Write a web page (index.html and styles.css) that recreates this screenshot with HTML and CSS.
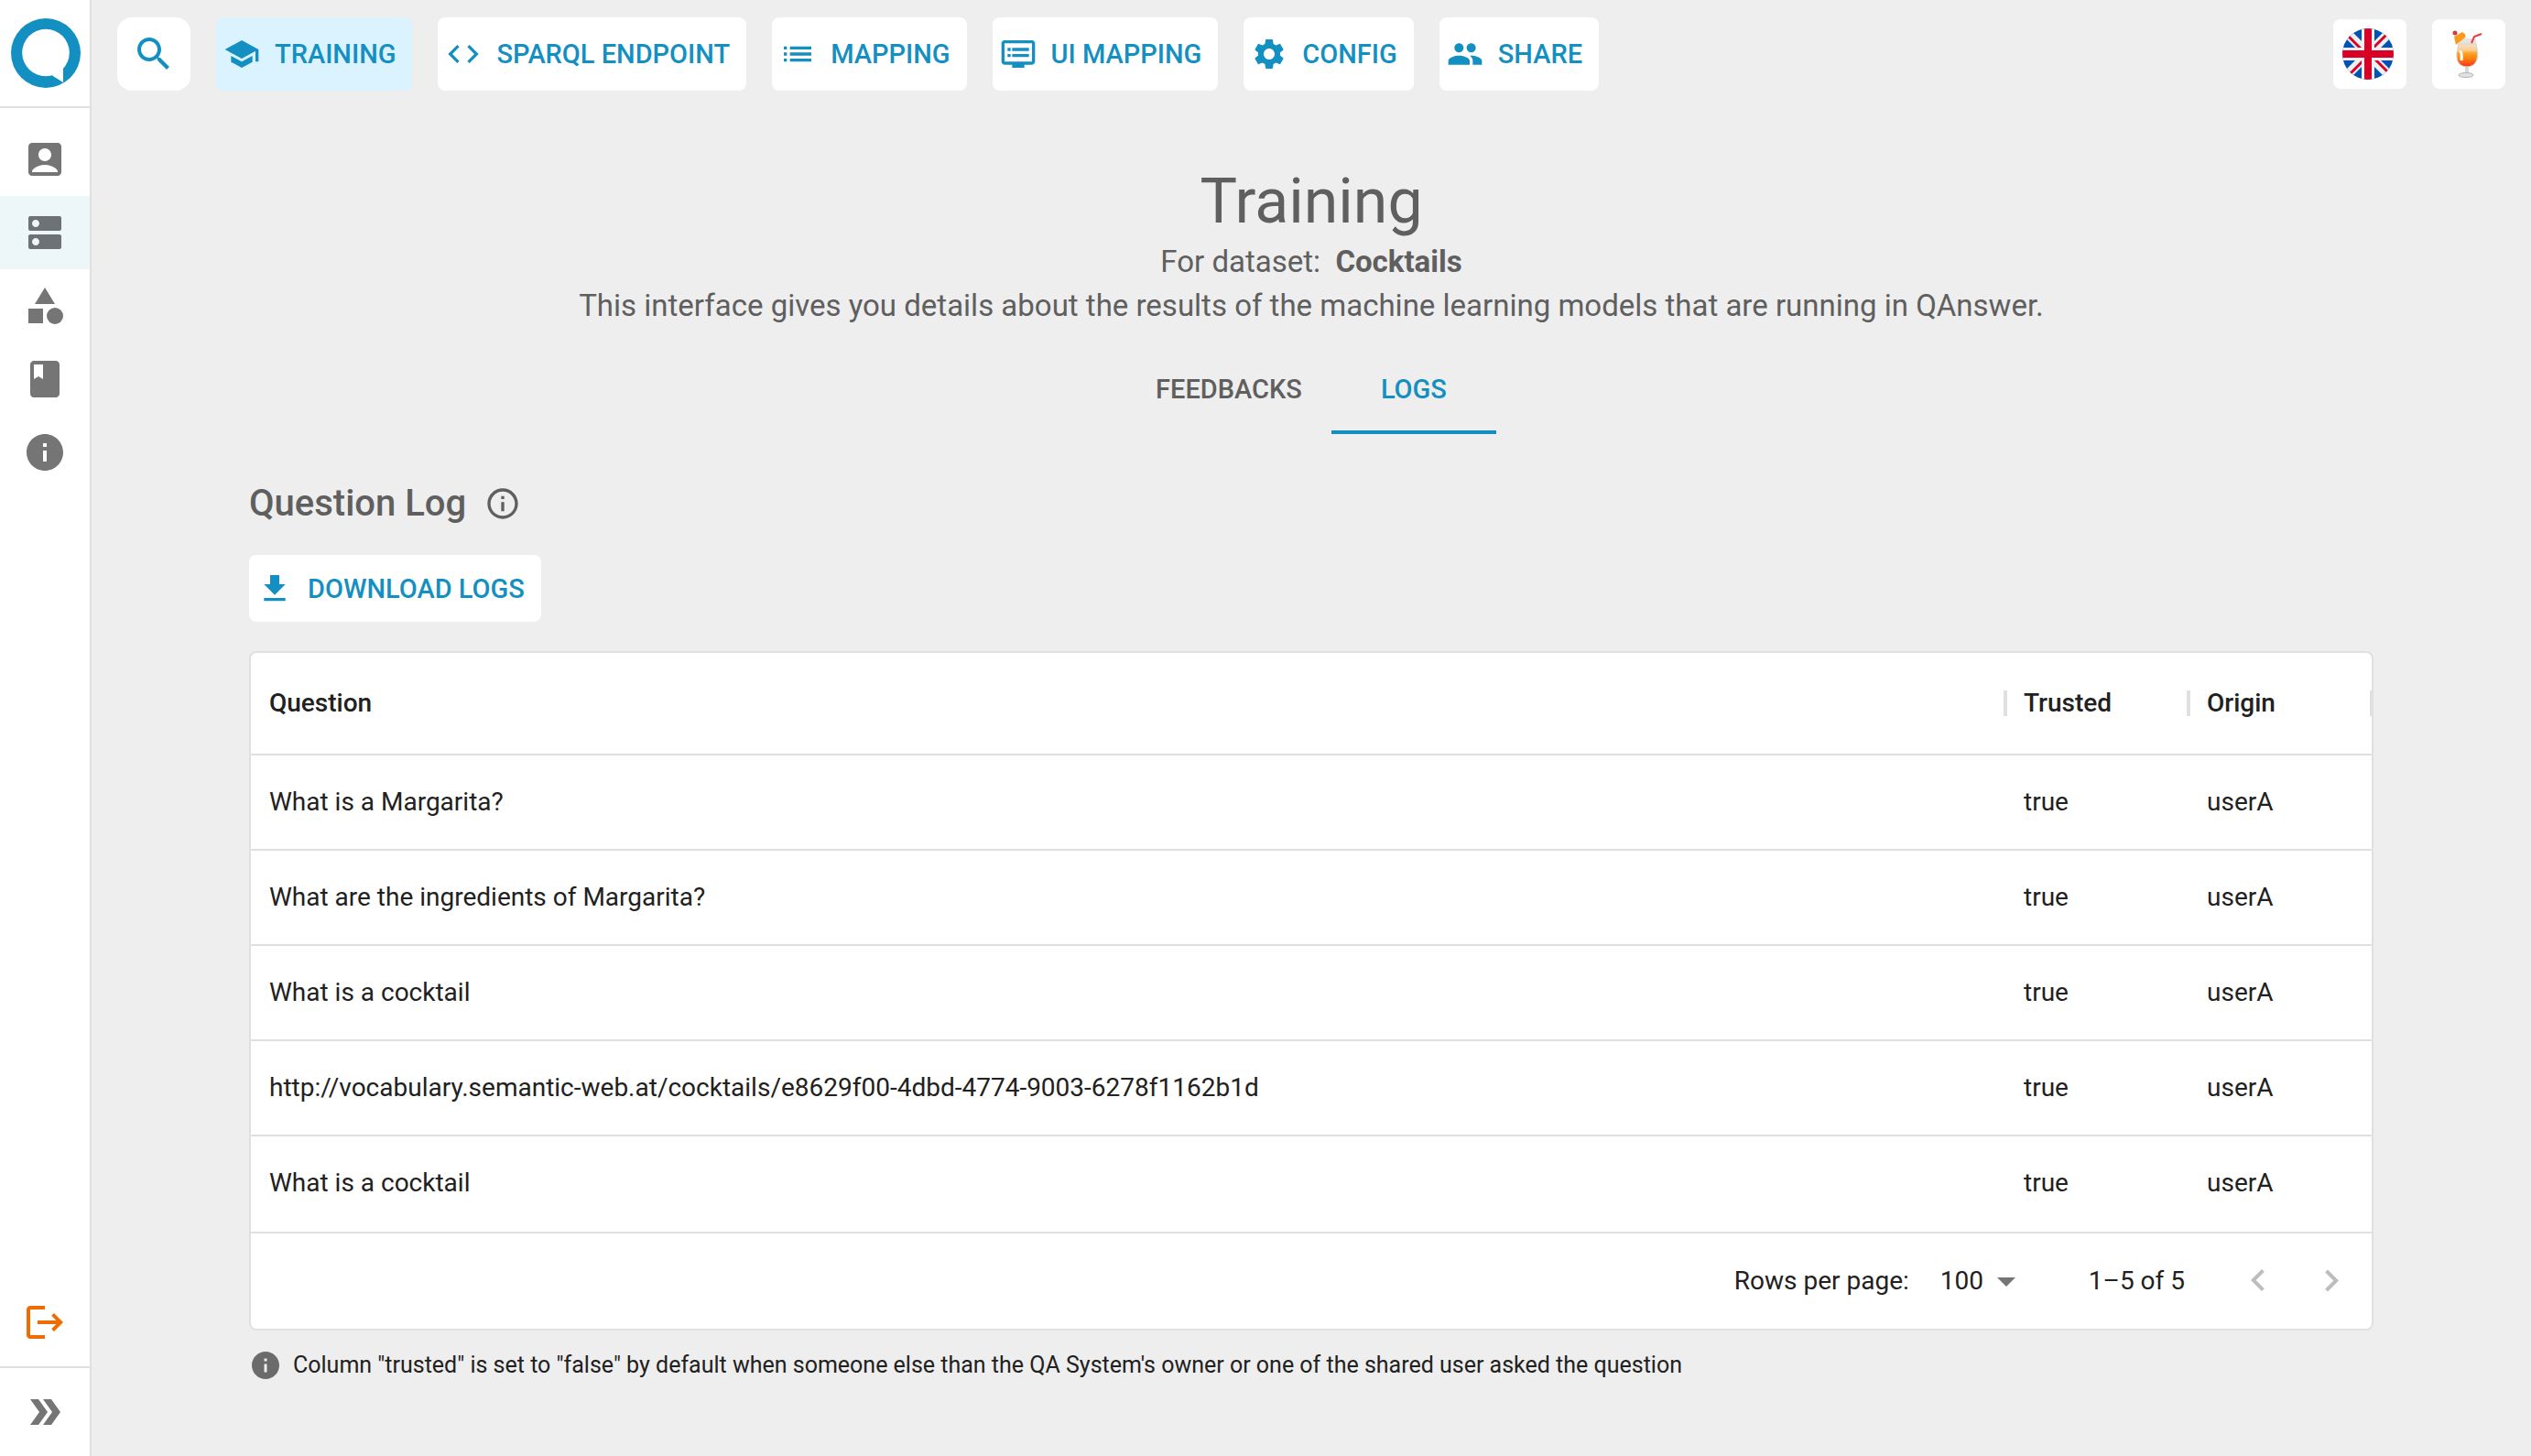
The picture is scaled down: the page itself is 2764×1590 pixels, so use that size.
FILE: index.html
```html
<!DOCTYPE html>
<html lang="en">
<head>
<meta charset="utf-8">
<title>QAnswer – Training</title>
<link rel="stylesheet" href="styles.css">
</head>
<body>
<div class="app">
  <nav class="sidebar" aria-label="Main">
    <a class="logo" href="#" aria-label="QAnswer home">
      <svg viewBox="0 0 76 76"><circle cx="38" cy="38" r="38" fill="#148fc2"/><circle cx="38" cy="37.5" r="25.8" fill="#fff"/><path d="M57 54v16l-12-7.500z" fill="#fff"/></svg>
    </a>
    <ul class="menu">
      <li><a class="menu-item" href="#" aria-label="Account"><svg class="icon-lg" viewBox="0 0 24 24"><path d="M19 3H5c-1.100 0-2 .9-2 2v14c0 1.100.9 2 2 2h14c1.100 0 2-.9 2-2V5c0-1.100-.9-2-2-2zm-7 3c1.930 0 3.500 1.570 3.500 3.500S13.930 13 12 13s-3.500-1.570-3.500-3.500S10.070 6 12 6zm7 13H5v-.23c0-.62.28-1.200.76-1.580C7.470 15.820 9.640 15 12 15s4.530.82 6.240 2.190c.48.38.76.97.76 1.580V19z"/></svg></a></li>
      <li><a class="menu-item selected" href="#" aria-label="Datasets"><svg class="icon-lg" viewBox="0 0 24 24"><path d="M20 13H4c-.55 0-1 .45-1 1v6c0 .55.45 1 1 1h16c.55 0 1-.45 1-1v-6c0-.55-.45-1-1-1zM7 19c-1.100 0-2-.9-2-2s.9-2 2-2 2 .9 2 2-.9 2-2 2zM20 3H4c-.55 0-1 .45-1 1v6c0 .55.45 1 1 1h16c.55 0 1-.45 1-1V4c0-.55-.45-1-1-1zM7 9c-1.100 0-2-.9-2-2s.9-2 2-2 2 .9 2 2-.9 2-2 2z"/></svg></a></li>
      <li><a class="menu-item" href="#" aria-label="Categories"><svg class="icon-lg" viewBox="0 0 24 24"><path d="M12 2l-5.500 9h11zM3 13.500h8v8H3z"/><circle cx="17.500" cy="17.500" r="4.500"/></svg></a></li>
      <li><a class="menu-item" href="#" aria-label="Documentation"><svg class="icon-lg" viewBox="0 0 24 24"><path d="M18 2H6c-1.100 0-2 .9-2 2v16c0 1.100.9 2 2 2h12c1.100 0 2-.9 2-2V4c0-1.100-.9-2-2-2zM6 4h5v8l-2.500-1.500L6 12V4z"/></svg></a></li>
      <li><a class="menu-item" href="#" aria-label="About"><svg class="icon-lg" viewBox="0 0 24 24"><path d="M12 2C6.480 2 2 6.480 2 12s4.480 10 10 10 10-4.480 10-10S17.520 2 12 2zm1 15h-2v-6h2v6zm0-8h-2V7h2v2z"/></svg></a></li>
    </ul>
    <button class="menu-item logout" type="button" aria-label="Log out"><svg class="icon-lg" viewBox="0 0 24 24"><path d="M17 7l-1.410 1.410L18.170 11H8v2h10.170l-2.580 2.580L17 17l5-5zM4 5h8V3H4c-1.100 0-2 .9-2 2v14c0 1.100.9 2 2 2h8v-2H4V5z"/></svg></button>
    <button class="expand" type="button" aria-label="Expand menu"><svg class="icon-lg" viewBox="0 0 24 24"><path d="M15.500 5H11l5 7-5 7h4.500l5-7zM8.500 5H4l5 7-5 7h4.500l5-7z"/></svg></button>
  </nav>

  <div class="page">
    <header class="topbar">
      <button class="btn search" type="button" aria-label="Search"><svg class="icon-md" viewBox="0 0 24 24"><path d="M15.500 14h-.79l-.28-.27C15.410 12.590 16 11.110 16 9.500 16 5.910 13.090 3 9.500 3S3 5.910 3 9.500 5.910 16 9.500 16c1.610 0 3.090-.59 4.230-1.570l.27.28v.79l5 4.990L20.490 19l-4.990-5zm-6 0C7.010 14 5 11.990 5 9.500S7.010 5 9.500 5 14 7.010 14 9.500 11.990 14 9.500 14z"/></svg></button>
      <a class="btn active" href="#"><svg class="icon" viewBox="0 0 24 24"><path d="M5 13.180v4L12 21l7-3.820v-4L12 17l-7-3.820zM12 3L1 9l11 6 9-4.910V17h2V9L12 3z"/></svg>TRAINING</a>
      <a class="btn" href="#"><svg class="icon" viewBox="0 0 24 24"><path d="M9.400 16.600L4.800 12l4.600-4.600L8 6l-6 6 6 6 1.400-1.400zm5.200 0l4.600-4.600-4.600-4.600L16 6l6 6-6 6-1.400-1.400z"/></svg>SPARQL ENDPOINT</a>
      <a class="btn" href="#"><svg class="icon" viewBox="0 0 24 24"><path d="M3 13h2v-2H3v2zm0 4h2v-2H3v2zm0-8h2V7H3v2zm4 4h14v-2H7v2zm0 4h14v-2H7v2zM7 7v2h14V7H7z"/></svg>MAPPING</a>
      <a class="btn" href="#"><svg class="icon" viewBox="0 0 24 24"><path d="M21 3H3c-1.100 0-2 .9-2 2v12c0 1.100.9 2 2 2h5v2h8v-2h5c1.100 0 1.990-.9 1.990-2L23 5c0-1.100-.9-2-2-2zm0 14H3V5h18v12zm-2-9H8v2h11V8zm0 4H8v2h11v-2zM7 8H5v2h2V8zm0 4H5v2h2v-2z"/></svg>UI MAPPING</a>
      <a class="btn" href="#"><svg class="icon" viewBox="0 0 24 24"><path d="M19.140 12.940c.04-.3.06-.61.06-.94 0-.32-.02-.64-.07-.94l2.030-1.580c.18-.14.23-.41.12-.61l-1.920-3.320c-.12-.22-.37-.29-.59-.22l-2.390.96c-.5-.38-1.030-.7-1.620-.94l-.36-2.540c-.04-.24-.24-.41-.48-.41h-3.840c-.24 0-.43.17-.47.41l-.36 2.540c-.59.24-1.130.57-1.620.94l-2.390-.96c-.22-.08-.47 0-.59.22L2.740 8.870c-.12.21-.08.47.12.61l2.030 1.580c-.05.3-.09.63-.09.94s.02.64.07.94l-2.030 1.580c-.18.14-.23.41-.12.61l1.920 3.320c.12.22.37.29.59.22l2.390-.96c.5.38 1.030.7 1.620.94l.36 2.540c.05.24.24.41.48.41h3.840c.24 0 .44-.17.47-.41l.36-2.540c.59-.24 1.130-.56 1.620-.94l2.390.96c.22.08.47 0 .59-.22l1.920-3.320c.12-.22.07-.47-.12-.61l-2.010-1.580zM12 15.600c-1.980 0-3.600-1.620-3.600-3.600s1.620-3.600 3.600-3.600 3.600 1.620 3.600 3.600-1.620 3.600-3.600 3.600z"/></svg>CONFIG</a>
      <a class="btn" href="#"><svg class="icon" viewBox="0 0 24 24"><path d="M16 11c1.660 0 2.990-1.340 2.990-3S17.660 5 16 5c-1.660 0-3 1.340-3 3s1.340 3 3 3zm-8 0c1.660 0 2.990-1.340 2.990-3S9.660 5 8 5C6.340 5 5 6.340 5 8s1.340 3 3 3zm0 2c-2.330 0-7 1.170-7 3.500V19h14v-2.500c0-2.330-4.670-3.500-7-3.500zm8 0c-.29 0-.62.02-.97.05 1.160.84 1.970 1.970 1.970 3.450V19h6v-2.500c0-2.330-4.670-3.500-7-3.500z"/></svg>SHARE</a>
      <div class="topbar-end">
        <button class="btn square" type="button" aria-label="Language: English">
          <svg class="flag" viewBox="0 0 56 56"><clipPath id="disc"><circle cx="28" cy="28" r="28"/></clipPath><g clip-path="url(#disc)"><path fill="#0052b4" d="M0 0h56v56H0z"/><path stroke="#f0f0f0" stroke-width="10" d="M4 4l48 48M52 4L4 52"/><path stroke="#d80027" stroke-width="3" d="M7 9l18 18M48 7L30 25M9 49l18-18M31 29l18 18"/><path fill="#f0f0f0" d="M21 0h14v56H21zM0 21h56v14H0z"/><path fill="#d80027" d="M24 0h8v56h-8zM0 24h56v8H0z"/></g></svg>
        </button>
        <button class="btn square" type="button" aria-label="Dataset: Cocktails">
          <svg class="flag" viewBox="0 0 56 56"><defs><linearGradient id="drink" x1="0" y1="0" x2="0" y2="1"><stop offset="0" stop-color="#fcdfc0"/><stop offset=".28" stop-color="#fbcb95"/><stop offset=".4" stop-color="#fca520"/><stop offset=".65" stop-color="#fc7f12"/><stop offset="1" stop-color="#fb2f12"/></linearGradient></defs><path d="M19 12q9-3 19 0l1 12H18z" fill="#e4e4e4"/><path d="M19 17h19q6 24-10 25-16-1-9-25z" fill="url(#drink)" stroke="#d5d5d5"/><path d="M26 42h4v8h-4z" fill="#d8d8d8"/><ellipse cx="27" cy="51" rx="8" ry="2.500" fill="#e2e2e2" stroke="#b5b5b5"/><path d="M20 26q3-2 2 9" fill="none" stroke="#fff" stroke-width="3"/><path d="M14 9l9-5q5 3 3 6l-10 8z" fill="#fb9a18"/><circle cx="15" cy="5" r="2.500" fill="#d23a3c"/><path d="M33 16l3-7 8-3" fill="none" stroke="#ea3a3a" stroke-width="2"/></svg>
        </button>
      </div>
    </header>

    <main class="content">
      <div class="intro">
        <h1>Training</h1>
        <p>For dataset: &nbsp;<strong>Cocktails</strong></p>
        <p>This interface gives you details about the results of the machine learning models that are running in QAnswer.</p>
      </div>
      <div class="tabs" role="tablist">
        <button class="tab" type="button" role="tab" aria-selected="false">FEEDBACKS</button>
        <button class="tab" type="button" role="tab" aria-selected="true">LOGS</button>
      </div>

      <h2>Question Log <svg class="icon" viewBox="0 0 24 24"><path d="M11 7h2v2h-2zm0 4h2v6h-2zm1-9C6.480 2 2 6.480 2 12s4.480 10 10 10 10-4.480 10-10S17.520 2 12 2zm0 18c-4.410 0-8-3.590-8-8s3.590-8 8-8 8 3.590 8 8-3.590 8-8 8z"/></svg></h2>
      <button class="btn download" type="button"><svg class="icon" viewBox="0 0 24 24"><path d="M19 9h-4V3H9v6H5l7 7 7-7zM5 18v2h14v-2H5z"/></svg>DOWNLOAD LOGS</button>

      <section class="grid" aria-label="Question log">
        <table>
          <thead>
            <tr><th scope="col">Question</th><th scope="col" class="narrow">Trusted</th><th scope="col" class="narrow">Origin</th></tr>
          </thead>
          <tbody>
            <tr><td>What is a Margarita?</td><td>true</td><td>userA</td></tr>
            <tr><td>What are the ingredients of Margarita?</td><td>true</td><td>userA</td></tr>
            <tr><td>What is a cocktail</td><td>true</td><td>userA</td></tr>
            <tr><td>http://vocabulary.semantic-web.at/cocktails/e8629f00-4dbd-4774-9003-6278f1162b1d</td><td>true</td><td>userA</td></tr>
            <tr><td>What is a cocktail</td><td>true</td><td>userA</td></tr>
          </tbody>
        </table>
        <div class="pagination">
          <label for="rows">Rows per page:</label>
          <div class="select">
            <select id="rows"><option>25</option><option>50</option><option selected>100</option></select>
            <svg class="icon-lg" viewBox="0 0 24 24"><path d="M7 10l5 5 5-5z"/></svg>
          </div>
          <span class="range">1–5 of 5</span>
          <button class="page-btn" type="button" disabled aria-label="Previous page"><svg class="icon-lg" viewBox="0 0 24 24"><path d="M15.410 16.090l-4.580-4.590 4.580-4.590L14 5.500l-6 6 6 6z"/></svg></button>
          <button class="page-btn" type="button" disabled aria-label="Next page"><svg class="icon-lg" viewBox="0 0 24 24"><path d="M8.590 16.340l4.580-4.590-4.580-4.590L10 5.750l6 6-6 6z"/></svg></button>
        </div>
      </section>
      <p class="note"><svg class="icon-sm" viewBox="0 0 24 24"><path d="M12 2C6.480 2 2 6.480 2 12s4.480 10 10 10 10-4.480 10-10S17.520 2 12 2zm1 15h-2v-6h2v6zm0-8h-2V7h2v2z"/></svg>Column "trusted" is set to "false" by default when someone else than the QA System's owner or one of the shared user asked the question</p>
    </main>
  </div>
</div>
</body>
</html>
```
FILE: styles.css
```css
* { box-sizing: border-box; }

body {
  margin: 0;
  background: #eee;
  color: #212121;
  font-family: Roboto, "Liberation Sans", sans-serif;
  font-size: 28px;
  line-height: 40px;
}

h1, h2, p, ul { margin: 0; padding: 0; }
a { color: inherit; text-decoration: none; }
button, select { font: inherit; color: inherit; border: 0; background: none; padding: 0; margin: 0; }
svg { display: block; flex: none; fill: currentColor; }

.icon-sm { width: 36px; height: 36px; }
.icon { width: 40px; height: 40px; }
.icon-md, .icon-lg { width: 48px; height: 48px; }

.app { display: flex; min-height: 100vh; }

/* Sidebar */
.sidebar {
  flex: none;
  display: flex;
  flex-direction: column;
  width: 100px;
  background: #fff;
  border-right: 2px solid #e0e0e0;
  color: #757575;
}
.logo {
  display: flex;
  align-items: center;
  height: 118px;
  padding-left: 12px;
  border-bottom: 2px solid #e0e0e0;
}
.logo svg { width: 76px; height: 76px; }
.menu { list-style: none; padding-top: 16px; flex: 1; }
.menu-item { display: flex; justify-content: center; align-items: center; width: 100%; height: 80px; }
.menu-item.selected { background: #edf6f9; color: #6d7275; }
.logout { color: #ef6c00; margin-bottom: 8px; }
.expand {
  display: flex;
  justify-content: center;
  align-items: center;
  height: 98px;
  border-top: 2px solid #e0e0e0;
}

/* Top bar */
.page { flex: 1; min-width: 0; }
.topbar { display: flex; align-items: center; gap: 28px; height: 118px; padding: 0 28px; }
.topbar-end { display: flex; gap: 28px; margin-left: auto; }
.btn {
  display: inline-flex;
  align-items: center;
  gap: 16px;
  height: 80px;
  padding: 0 18px 0 8px;
  border-radius: 8px;
  background: #fff;
  color: #148fc2;
  font-size: 29px;
  font-weight: 500;
  white-space: nowrap;
}
.btn.active { background: #daf3ff; }
.btn.search { width: 80px; padding: 0; justify-content: center; border-radius: 16px; }
.btn.square { width: 80px; height: 76px; padding: 0 4px 0 0; justify-content: center; }
.btn.download { height: 73px; }
.flag { width: 56px; height: 56px; }

/* Content */
.content { max-width: 2400px; margin: 0 auto; padding: 60px 40px; }
.intro { text-align: center; color: #5f5f5f; font-size: 33px; line-height: 48px; }
h1 { font-size: 68px; line-height: 84px; font-weight: 400; }
strong { font-weight: 700; }

.tabs { display: flex; justify-content: center; margin-top: 20px; }
.tab {
  min-width: 180px;
  height: 96px;
  padding: 0 32px;
  border-bottom: 4px solid transparent;
  border-top: 2px solid transparent;
  color: #5f5f5f;
  font-size: 29px;
  font-weight: 500;
}
.tab[aria-selected="true"] { color: #148fc2; border-bottom-color: #148fc2; }

h2 {
  display: flex;
  align-items: center;
  gap: 20px;
  margin: 44px 0 24px;
  color: #5f5f5f;
  font-size: 40px;
  line-height: 64px;
  font-weight: 500;
}

/* Data grid */
.grid {
  margin-top: 32px;
  border: 2px solid #e0e0e0;
  border-radius: 8px;
  background: #fff;
  overflow: hidden;
}
table { width: 100%; border-collapse: separate; border-spacing: 0; table-layout: fixed; }
th, td { padding: 0 20px; text-align: left; border-bottom: 2px solid #e0e0e0; }
th { position: relative; height: 112px; font-weight: 500; }
th::after {
  content: "";
  position: absolute;
  right: -2px;
  top: 41px;
  width: 4px;
  height: 28px;
  background: #e0e0e0;
}
td { height: 104px; }
tbody tr:last-child td { border-bottom-color: transparent; }
.narrow { width: 200px; }

.pagination {
  display: flex;
  align-items: center;
  justify-content: flex-end;
  height: 106px;
  padding-right: 4px;
  border-top: 2px solid #e0e0e0;
}
.select { position: relative; margin: 0 66px 0 18px; }
.select select { appearance: none; width: 112px; height: 56px; padding-left: 16px; }
.select svg { position: absolute; right: 0; top: 4px; color: #757575; pointer-events: none; }
.range { margin-right: 40px; }
.page-btn { padding: 16px; color: #bdbdbd; }

.note { display: flex; align-items: center; gap: 12px; margin-top: 18px; font-size: 25px; }
.note svg { color: #6b6b6b; }
```
